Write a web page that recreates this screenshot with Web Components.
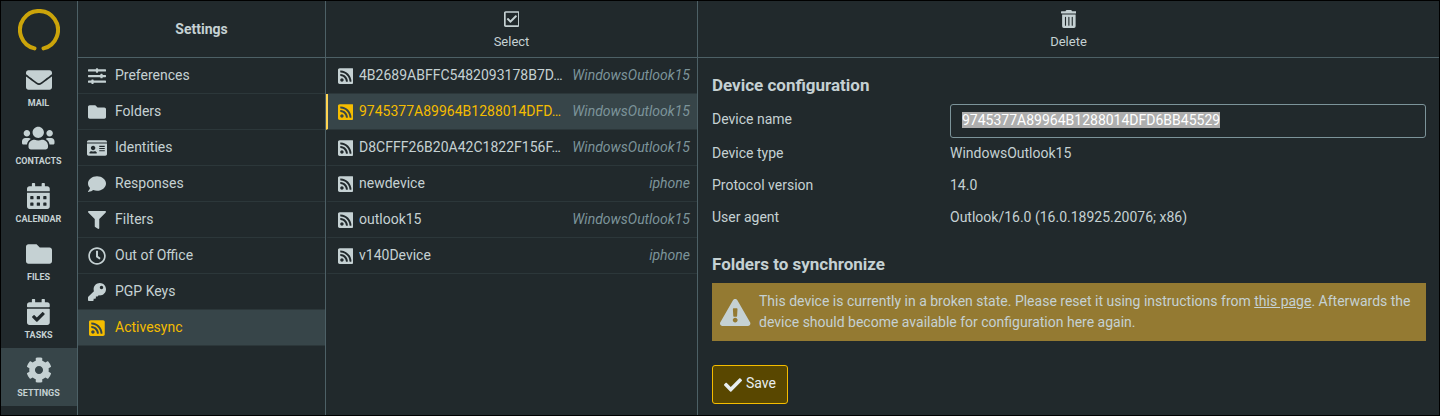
<!DOCTYPE html>
<html lang="en">
<head>
<meta charset="utf-8">
<meta name="viewport" content="width=device-width, initial-scale=1">
<title>Settings</title>
<style>
  :root {
    --bg: #21292c;
    --text: #c5d1d3;
    --line: #4d6066;
    --row-line: #2c373a;
    --active: #374549;
    --accent: #f4bc00;
    --mark: #ffd452;
    --hint: #7c949a;
    --header: 57px;
  }
  * { box-sizing: border-box; }
  body {
    margin: 0;
    background: #000;
    color: var(--text);
    font: 14px/21px Roboto, "Liberation Sans", sans-serif;
  }
</style>
</head>
<body>
<mail-app></mail-app>

<script>
const ICONS = {
  envelope: [512, "M502.3 190.8c3.9-3.1 9.7-.2 9.7 4.7V400c0 26.5-21.5 48-48 48H48c-26.5 0-48-21.5-48-48V195.6c0-5 5.7-7.8 9.7-4.7 22.4 17.4 52.1 39.5 154.1 113.6 21.1 15.4 56.7 47.8 92.2 47.6 35.7.3 72-32.8 92.3-47.6 102-74.1 131.6-96.3 154-113.7zM256 320c23.2.4 56.6-29.2 73.4-41.4 132.7-96.3 142.8-104.7 173.4-128.7 5.8-4.5 9.2-11.5 9.2-18.9v-19c0-26.5-21.5-48-48-48H48c-26.5 0-48 21.5-48 48v19c0 7.4 3.4 14.3 9.2 18.9 30.6 23.9 40.7 32.4 173.4 128.7 16.8 12.2 50.2 41.8 73.4 41.4z"],
  users: [640, "M96 224c35.3 0 64-28.7 64-64s-28.7-64-64-64-64 28.7-64 64 28.7 64 64 64zm448 0c35.3 0 64-28.7 64-64s-28.7-64-64-64-64 28.7-64 64 28.7 64 64 64zm32 32h-64c-17.6 0-33.5 7.1-45.1 18.6 40.3 22.1 68.9 62 75.1 109.4h66c17.7 0 32-14.3 32-32v-32c0-35.3-28.7-64-64-64zm-256 0c61.9 0 112-50.1 112-112S381.9 32 320 32 208 82.1 208 144s50.1 112 112 112zm76.8 32h-8.3c-20.8 10-43.9 16-68.5 16s-47.6-6-68.5-16h-8.3C179.6 288 128 339.6 128 403.2V432c0 26.5 21.5 48 48 48h288c26.5 0 48-21.5 48-48v-28.8c0-63.6-51.6-115.2-115.2-115.2zm-223.7-13.4C161.5 263.1 145.6 256 128 256H64c-35.3 0-64 28.7-64 64v32c0 17.7 14.3 32 32 32h65.9c6.3-47.4 34.9-87.3 75.2-109.4z"],
  calendar: [448, "M0 464c0 26.5 21.5 48 48 48h352c26.5 0 48-21.5 48-48V192H0v272zm320-196c0-6.600 5.400-12 12-12h40c6.600 0 12 5.400 12 12v40c0 6.600-5.400 12-12 12h-40c-6.600 0-12-5.400-12-12v-40zm0 128c0-6.600 5.400-12 12-12h40c6.600 0 12 5.400 12 12v40c0 6.600-5.400 12-12 12h-40c-6.600 0-12-5.400-12-12v-40zM192 268c0-6.600 5.400-12 12-12h40c6.600 0 12 5.400 12 12v40c0 6.600-5.400 12-12 12h-40c-6.600 0-12-5.400-12-12v-40zm0 128c0-6.600 5.400-12 12-12h40c6.600 0 12 5.400 12 12v40c0 6.600-5.400 12-12 12h-40c-6.600 0-12-5.400-12-12v-40zM64 268c0-6.600 5.400-12 12-12h40c6.600 0 12 5.400 12 12v40c0 6.600-5.400 12-12 12H76c-6.600 0-12-5.400-12-12v-40zm0 128c0-6.600 5.400-12 12-12h40c6.600 0 12 5.400 12 12v40c0 6.600-5.400 12-12 12H76c-6.600 0-12-5.400-12-12v-40zM400 64h-48V16c0-8.800-7.200-16-16-16h-32c-8.800 0-16 7.200-16 16v48H160V16c0-8.800-7.200-16-16-16h-32c-8.800 0-16 7.200-16 16v48H48C21.500 64 0 85.500 0 112v48h448v-48c0-26.500-21.500-48-48-48z"],
  folder: [512, "M464 128H272l-64-64H48C21.5 64 0 85.5 0 112v288c0 26.5 21.5 48 48 48h416c26.5 0 48-21.5 48-48V176c0-26.5-21.5-48-48-48z"],
  tasks: [448, "M436 160H12c-6.627 0-12-5.373-12-12v-36c0-26.51 21.49-48 48-48h48V12c0-6.627 5.373-12 12-12h40c6.627 0 12 5.373 12 12v52h128V12c0-6.627 5.373-12 12-12h40c6.627 0 12 5.373 12 12v52h48c26.51 0 48 21.49 48 48v36c0 6.627-5.373 12-12 12zM12 192h424c6.627 0 12 5.373 12 12v260c0 26.51-21.49 48-48 48H48c-26.51 0-48-21.49-48-48V204c0-6.627 5.373-12 12-12zm333.296 95.947l-28.169-28.398c-4.667-4.705-12.265-4.736-16.97-.068L194.12 364.665l-45.98-46.352c-4.667-4.705-12.266-4.736-16.971-.068l-28.397 28.17c-4.705 4.667-4.736 12.265-.068 16.97l82.601 83.269c4.667 4.705 12.265 4.736 16.97.068l142.953-141.805c4.705-4.667 4.736-12.265.068-16.97z"],
  cog: [512, "M487.4 315.7l-42.6-24.6c4.3-23.2 4.3-47 0-70.2l42.6-24.6c4.9-2.8 7.1-8.6 5.500-14-11.100-35.600-30-67.800-54.700-94.600-3.800-4.100-10-5.100-14.800-2.300L380.800 110c-17.900-15.400-38.500-27.300-60.800-35.100V25.800c0-5.600-3.900-10.500-9.400-11.700-36.700-8.200-74.300-7.800-109.200 0-5.500 1.200-9.400 6.100-9.400 11.700V75c-22.200 7.900-42.800 19.800-60.800 35.100L88.700 85.500c-4.900-2.800-11-1.900-14.800 2.300-24.700 26.700-43.600 58.900-54.700 94.600-1.700 5.400.6 11.200 5.500 14L67.300 221c-4.300 23.200-4.300 47 0 70.200l-42.600 24.600c-4.900 2.800-7.100 8.600-5.500 14 11.100 35.600 30 67.800 54.700 94.600 3.800 4.100 10 5.100 14.800 2.300l42.600-24.600c17.900 15.400 38.500 27.300 60.800 35.100v49.200c0 5.600 3.900 10.500 9.400 11.700 36.700 8.200 74.300 7.800 109.200 0 5.500-1.200 9.400-6.100 9.400-11.700v-49.200c22.200-7.900 42.800-19.800 60.800-35.100l42.600 24.600c4.900 2.800 11 1.900 14.800-2.300 24.700-26.700 43.600-58.900 54.700-94.600 1.500-5.500-.7-11.300-5.600-14.100zM256 336c-44.100 0-80-35.900-80-80s35.900-80 80-80 80 35.900 80 80-35.900 80-80 80z"],
  sliders: [512, "M496 384H160v-16c0-8.8-7.2-16-16-16h-32c-8.8 0-16 7.2-16 16v16H16c-8.8 0-16 7.2-16 16v32c0 8.8 7.2 16 16 16h80v16c0 8.8 7.2 16 16 16h32c8.8 0 16-7.2 16-16v-16h336c8.8 0 16-7.2 16-16v-32c0-8.8-7.2-16-16-16zm0-160h-80v-16c0-8.8-7.2-16-16-16h-32c-8.8 0-16 7.2-16 16v16H16c-8.8 0-16 7.2-16 16v32c0 8.8 7.2 16 16 16h336v16c0 8.8 7.2 16 16 16h32c8.8 0 16-7.2 16-16v-16h80c8.8 0 16-7.2 16-16v-32c0-8.8-7.2-16-16-16zm0-160H288V48c0-8.8-7.2-16-16-16h-32c-8.8 0-16 7.2-16 16v16H16C7.2 64 0 71.2 0 80v32c0 8.8 7.2 16 16 16h208v16c0 8.8 7.2 16 16 16h32c8.8 0 16-7.2 16-16v-16h208c8.8 0 16-7.2 16-16V80c0-8.8-7.2-16-16-16z"],
  card: [576, "M528 32H48C21.5 32 0 53.5 0 80v16h576V80c0-26.5-21.5-48-48-48zM0 432c0 26.5 21.5 48 48 48h480c26.5 0 48-21.5 48-48V128H0v304zm352-232c0-4.4 3.6-8 8-8h144c4.4 0 8 3.6 8 8v16c0 4.4-3.6 8-8 8H360c-4.4 0-8-3.6-8-8v-16zm0 64c0-4.4 3.6-8 8-8h144c4.4 0 8 3.6 8 8v16c0 4.4-3.6 8-8 8H360c-4.4 0-8-3.6-8-8v-16zm0 64c0-4.4 3.6-8 8-8h144c4.4 0 8 3.6 8 8v16c0 4.4-3.6 8-8 8H360c-4.4 0-8-3.6-8-8v-16zM176 192c35.3 0 64 28.7 64 64s-28.7 64-64 64-64-28.7-64-64 28.7-64 64-64zM67.1 396.2C75.5 370.5 99.6 352 128 352h8.2c12.3 5.1 25.7 8 39.8 8s27.6-2.9 39.8-8h8.2c28.4 0 52.5 18.5 60.9 44.2 3.2 9.9-5.2 19.8-15.6 19.8H82.7c-10.4 0-18.8-10-15.6-19.8z"],
  comment: [512, "M256 32C114.6 32 0 125.1 0 240c0 49.6 21.4 95 57 130.7C44.5 421.1 2.7 466 2.2 466.5c-2.2 2.3-2.8 5.7-1.5 8.7S4.8 480 8 480c66.3 0 116-31.8 140.6-51.4 32.7 12.3 69 19.4 107.4 19.4 141.4 0 256-93.1 256-208S397.4 32 256 32z"],
  filter: [512, "M487.976 0H24.028C2.71 0-8.047 25.866 7.058 40.971L192 225.941V432c0 7.831 3.821 15.17 10.237 19.662l80 55.98C298.02 518.69 320 507.493 320 487.98V225.941l184.947-184.97C520.021 25.896 509.338 0 487.976 0z"],
  clock: [512, "M256 8C119 8 8 119 8 256s111 248 248 248 248-111 248-248S393 8 256 8zm0 448c-110.5 0-200-89.5-200-200S145.5 56 256 56s200 89.5 200 200-89.5 200-200 200zm61.8-104.4l-84.9-61.7c-3.1-2.3-4.9-5.9-4.9-9.7V116c0-6.6 5.4-12 12-12h32c6.6 0 12 5.4 12 12v141.7l66.8 48.6c5.4 3.9 6.5 11.4 2.6 16.8L334.6 349c-3.9 5.3-11.4 6.5-16.8 2.6z"],
  key: [512, "M512 176.001C512 273.203 433.202 352 336 352c-11.22 0-22.19-1.062-32.827-3.069l-24.012 27.014A23.999 23.999 0 0 1 261.223 384H224v40c0 13.255-10.745 24-24 24h-40v40c0 13.255-10.745 24-24 24H24c-13.255 0-24-10.745-24-24v-78.059c0-6.365 2.529-12.47 7.029-16.971l161.802-161.802C163.108 213.814 160 195.271 160 176 160 78.798 238.797.001 335.999 0 433.488-.001 512 78.511 512 176.001zM336 128c0 26.51 21.49 48 48 48s48-21.49 48-48-21.49-48-48-48-48 21.49-48 48z"],
  rss: [448, "M400 32H48C21.49 32 0 53.49 0 80v352c0 26.51 21.49 48 48 48h352c26.51 0 48-21.49 48-48V80c0-26.51-21.49-48-48-48zM112 416c-26.51 0-48-21.49-48-48s21.49-48 48-48 48 21.49 48 48-21.49 48-48 48zm157.533 0h-34.335c-6.011 0-11.051-4.636-11.442-10.634-5.214-80.05-69.243-143.92-149.123-149.123-5.997-.39-10.633-5.431-10.633-11.441v-34.335c0-6.535 5.468-11.777 11.994-11.425 110.546 5.974 198.997 94.536 204.964 204.964.352 6.526-4.89 11.994-11.425 11.994zm103.027 0h-34.334c-6.161 0-11.175-4.882-11.427-11.038-5.598-136.535-115.204-246.161-251.76-251.76C68.882 152.949 64 147.935 64 141.774V107.44c0-6.454 5.338-11.664 11.787-11.432 167.83 6.025 302.21 141.191 308.205 308.205.232 6.449-4.978 11.787-11.432 11.787z"],
  select: [448, "M400 32H48C21.49 32 0 53.49 0 80v352c0 26.51 21.49 48 48 48h352c26.51 0 48-21.49 48-48V80c0-26.51-21.49-48-48-48zm0 400H48V80h352v352zm-35.864-241.724L191.547 361.48c-4.705 4.667-12.303 4.637-16.97-.068l-90.781-91.516c-4.667-4.705-4.637-12.303.069-16.971l22.719-22.536c4.705-4.667 12.303-4.637 16.97.069l59.792 60.277 141.352-140.216c4.705-4.667 12.303-4.637 16.97.068l22.536 22.718c4.667 4.706 4.637 12.304-.068 16.971z"],
  trash: [448, "M32 464a48 48 0 0 0 48 48h288a48 48 0 0 0 48-48V128H32zm272-256a16 16 0 0 1 32 0v224a16 16 0 0 1-32 0zm-96 0a16 16 0 0 1 32 0v224a16 16 0 0 1-32 0zm-96 0a16 16 0 0 1 32 0v224a16 16 0 0 1-32 0zM432 32H312l-9.4-18.7A24 24 0 0 0 288.1 0H159.8a23.72 23.72 0 0 0-21.4 13.3L128 32H16A16 16 0 0 0 0 48v32a16 16 0 0 0 16 16h416a16 16 0 0 0 16-16V48a16 16 0 0 0-16-16z"],
  check: [512, "M173.898 439.404l-166.4-166.4c-9.997-9.997-9.997-26.206 0-36.204l36.203-36.204c9.997-9.998 26.207-9.998 36.204 0L192 312.69 432.095 72.596c9.997-9.997 26.207-9.997 36.204 0l36.203 36.204c9.997 9.997 9.997 26.206 0 36.204l-294.4 294.401c-9.998 9.997-26.207 9.997-36.204-.001z"],
  warning: [576, "M569.517 440.013C587.975 472.007 564.806 512 527.94 512H48.054c-36.937 0-59.999-40.055-41.577-71.987L246.423 23.985c18.467-32.009 64.72-31.951 83.154 0l239.94 416.028zM288 354c-25.405 0-46 20.595-46 46s20.595 46 46 46 46-20.595 46-46-20.595-46-46-46zm-43.673-165.346l7.418 136c.347 6.364 5.609 11.346 11.982 11.346h48.546c6.373 0 11.635-4.982 11.982-11.346l7.418-136c.375-6.874-5.098-12.654-11.982-12.654h-63.383c-6.884 0-12.356 5.78-11.981 12.654z"]
};

const define = (name, html, setup) => customElements.define(name, class extends HTMLElement {
  connectedCallback() {
    if (this.shadowRoot) return;
    const root = this.attachShadow({ mode: "open" });
    root.innerHTML = "<style>*{box-sizing:border-box}</style>" +
      (typeof html === "function" ? html(this) : html);
    if (setup) setup(root, this);
  }
});

/* Glyph centred in its box; the height is set with --size */
define("ui-icon", el => {
  const [width, path] = ICONS[el.getAttribute("name")];
  return `<style>
    :host { display: flex; justify-content: center; flex: none; }
    svg { display: block; height: var(--size, 18px); fill: currentColor; }
  </style>
  <svg viewBox="0 0 ${width} 512" aria-hidden="true"><path d="${path}"/></svg>`;
});

define("task-link", el => `<style>
    :host { display: block; }
    a {
      display: flex; flex-direction: column; align-items: center; gap: 2px;
      height: 58px; padding: 9px 1px 0 0;
      color: inherit; text-decoration: none; text-transform: uppercase;
      font-size: 9px; line-height: 16px; font-weight: 700;
    }
    ui-icon { --size: 26px; }
    :host([active]) a { background: var(--active); }
  </style>
  <a href="#"><ui-icon name="${el.getAttribute("icon")}"></ui-icon><span><slot></slot></span></a>`);

define("task-menu", `<style>
    :host { display: block; border-right: 1px solid var(--line); background: var(--bg); }
    .logo { display: flex; justify-content: center; align-items: center; height: var(--header); }
    .logo svg { display: block; width: 42px; height: 42px; }
  </style>
  <div class="logo">
    <svg viewBox="0 0 42 42" role="img" aria-label="Logo">
      <path d="M16.5 39.4A19 19 0 1 1 25.5 39.4" fill="none" stroke="#cba40a" stroke-width="4" stroke-linecap="round"/>
    </svg>
  </div>
  <nav aria-label="Tasks">
    <task-link icon="envelope">Mail</task-link>
    <task-link icon="users">Contacts</task-link>
    <task-link icon="calendar">Calendar</task-link>
    <task-link icon="folder">Files</task-link>
    <task-link icon="tasks">Tasks</task-link>
    <task-link icon="cog" active>Settings</task-link>
  </nav>`);

/* A column of the page: header bar on top, content below */
define("app-pane", `<style>
    :host { display: block; min-width: 0; background: var(--bg); }
    :host([divided]) { border-right: 1px solid var(--line); }
    header {
      display: flex; justify-content: center; align-items: center;
      height: var(--header); border-bottom: 1px solid var(--line);
    }
  </style>
  <header><slot name="header"></slot></header>
  <slot></slot>`);

define("tool-button", el => `<style>
    :host { display: block; }
    button {
      display: flex; flex-direction: column; align-items: center; gap: 5px;
      padding: 3px 0 0; border: 0; background: none; color: inherit;
      font: 13px/18px Roboto, "Liberation Sans", sans-serif;
    }
  </style>
  <button type="button"><ui-icon name="${el.getAttribute("icon")}"></ui-icon><span><slot></slot></span></button>`);

define("list-row", el => `<style>
    :host { display: block; }
    a {
      display: flex; align-items: center;
      height: 36px; padding: 0 7px 1px 9px;
      border-bottom: 1px solid var(--row-line);
      color: inherit; text-decoration: none;
    }
    ui-icon { width: 20px; margin-right: 8px; margin-top: 2px; }
    .name { flex: 1; min-width: 0; overflow: hidden; text-overflow: ellipsis; white-space: nowrap; }
    .hint { margin-left: 4px; color: var(--hint); font-style: italic; }
    .hint:empty { display: none; }
    :host([active]) a { background: var(--active); }
    :host([active]) :is(ui-icon, .name) { color: var(--accent); }
    :host([marked]) a { border-left: 2px solid transparent; padding-left: 7px; }
    :host([marked][active]) a { border-left-color: var(--mark); }
    :host([marked]) ui-icon { width: 21px; margin-right: 3px; }
  </style>
  <a href="#"><ui-icon name="${el.getAttribute("icon")}"></ui-icon><span class="name"><slot></slot></span><span class="hint">${el.getAttribute("hint") || ""}</span></a>`);

define("alert-box", `<style>
    :host { display: flex; align-items: center; padding: 8px; background: #947a32; }
    ui-icon { --size: 27px; width: 31px; margin-right: 8px; }
    p { margin: 0; }
  </style>
  <ui-icon name="warning"></ui-icon><p><slot></slot></p>`);

define("device-form", `<style>
    :host { display: block; padding: 15px 13px 11px 14px; }
    h2 { margin: 0 0 7px; font-size: 17px; line-height: 24px; font-weight: 700; }
    dl { margin: 0 0 18px; }
    dl div { display: grid; grid-template-columns: 1fr 2fr; }
    dt, dd { margin: 0; padding: 5px 0 6px; }
    dd.field { padding: 0; }
    input {
      display: block; width: 100%; height: 34px; padding: 0 11px 3px;
      border: 1px solid var(--hint); border-radius: 3px; outline: 0;
      background: transparent; color: var(--text);
      font: 14px Roboto, "Liberation Sans", sans-serif;
    }
    input::selection { background: rgba(176, 176, 176, .99); color: #fff; }
    a { color: inherit; }
    button {
      display: flex; align-items: center; gap: 4px;
      height: 39px; margin-top: 24px; padding: 0 11px 2px;
      border: 1px solid var(--accent); border-radius: 3px;
      background: #594700; color: #e8eef0;
      font: 14px/21px Roboto, "Liberation Sans", sans-serif;
    }
    button ui-icon { margin-top: 3px; }
  </style>
  <form>
    <h2>Device configuration</h2>
    <dl>
      <div><dt><label for="name">Device name</label></dt><dd class="field"><input id="name" type="text" value="9745377A89964B1288014DFD6BB45529" spellcheck="false"></dd></div>
      <div><dt>Device type</dt><dd>WindowsOutlook15</dd></div>
      <div><dt>Protocol version</dt><dd>14.0</dd></div>
      <div><dt>User agent</dt><dd>Outlook/16.0 (16.0.18925.20076; x86)</dd></div>
    </dl>
    <h2>Folders to synchronize</h2>
    <alert-box>This device is currently in a broken state. Please reset it using instructions from <a href="#">this page</a>. Afterwards the device should become available for configuration here again.</alert-box>
    <button type="button"><ui-icon name="check"></ui-icon>Save</button>
  </form>`, root => {
    const input = root.querySelector("input");
    input.focus();
    input.select();
  });

define("mail-app", `<style>
    :host {
      display: grid; grid-template-columns: 77px 248px 372px minmax(0, 1fr);
      min-height: 100vh; border: 1px solid #000;
    }
    h1 { margin: 0; font-size: 14px; line-height: 21px; font-weight: 700; }
  </style>
  <task-menu></task-menu>
  <app-pane divided>
    <h1 slot="header">Settings</h1>
    <list-row icon="sliders">Preferences</list-row>
    <list-row icon="folder">Folders</list-row>
    <list-row icon="card">Identities</list-row>
    <list-row icon="comment">Responses</list-row>
    <list-row icon="filter">Filters</list-row>
    <list-row icon="clock">Out of Office</list-row>
    <list-row icon="key">PGP Keys</list-row>
    <list-row icon="rss" active>Activesync</list-row>
  </app-pane>
  <app-pane divided>
    <tool-button slot="header" icon="select">Select</tool-button>
    <list-row marked icon="rss" hint="WindowsOutlook15">4B2689ABFFC5482093178B7D…</list-row>
    <list-row marked icon="rss" hint="WindowsOutlook15" active>9745377A89964B1288014DFD…</list-row>
    <list-row marked icon="rss" hint="WindowsOutlook15">D8CFFF26B20A42C1822F156F…</list-row>
    <list-row marked icon="rss" hint="iphone">newdevice</list-row>
    <list-row marked icon="rss" hint="WindowsOutlook15">outlook15</list-row>
    <list-row marked icon="rss" hint="iphone">v140Device</list-row>
  </app-pane>
  <app-pane>
    <tool-button slot="header" icon="trash">Delete</tool-button>
    <device-form></device-form>
  </app-pane>`);
</script>
</body>
</html>
